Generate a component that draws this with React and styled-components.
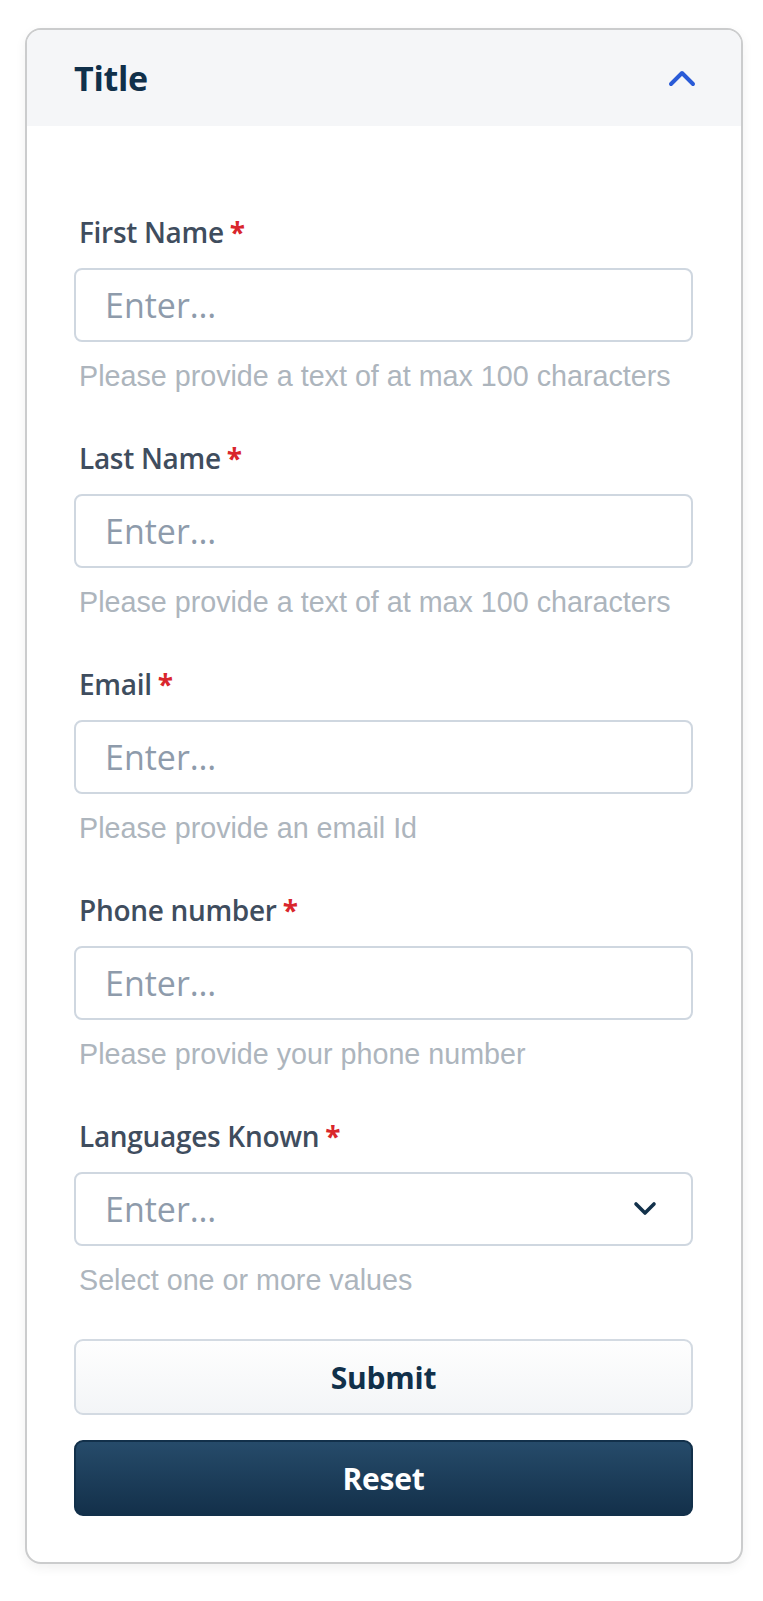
import React from "react";
import styled, { createGlobalStyle } from "styled-components";

const GlobalStyle = createGlobalStyle`
  * { box-sizing: border-box; }
  html, body { margin: 0; padding: 0; background: #ffffff; }
  body { font-family: "Open Sans", "Liberation Sans", sans-serif; }
`;

const Page = styled.div`
  padding: 28px 20px 36px 25px;
`;

const Card = styled.section`
  width: 718px;
  border: 2px solid #cbcccd;
  border-radius: 16px;
  overflow: hidden;
  background: #ffffff;
  box-shadow: 0 4px 12px rgba(0, 0, 0, 0.06);
`;

const Header = styled.header`
  height: 96px;
  display: flex;
  align-items: center;
  justify-content: space-between;
  padding: 0 44px 0 47px;
  background: #f5f6f8;
`;

const Title = styled.h2`
  margin: 0;
  font-family: "Open Sans", sans-serif;
  font-size: 34px;
  font-weight: 700;
  color: #10304a;
  letter-spacing: -0.3px;
`;

const IconButton = styled.button`
  border: 0;
  background: transparent;
  padding: 0;
  display: flex;
  align-items: center;
  color: ${(p) => p.$color || "#2a5bd7"};
`;

const Body = styled.form`
  display: flex;
  flex-direction: column;
  padding: 86px 48px 46px 47px;
`;

const Fields = styled.div`
  display: flex;
  flex-direction: column;
  gap: 42px;
`;

const Field = styled.div`
  display: flex;
  flex-direction: column;
`;

const Label = styled.label`
  font-family: "Open Sans", sans-serif;
  font-size: 28px;
  line-height: 40px;
  font-weight: 600;
  color: #3f4d5e;
  margin: 0 0 16px 5px;
  letter-spacing: -0.3px;
`;

const Required = styled.span`
  color: #d9262c;
  font-weight: 700;
  margin-left: 6px;
`;

const inputBox = `
  height: 74px;
  width: 100%;
  border: 2px solid #cfd7e0;
  border-radius: 8px;
  background: #ffffff;
  padding: 0 28px 0 29px;
  font-family: "Open Sans", sans-serif;
  font-size: 34px;
  color: #10304a;
`;

const TextInput = styled.input`
  ${inputBox}
  outline: none;
  &::placeholder {
    color: #8e9bab;
    opacity: 1;
  }
`;

const Select = styled.div`
  ${inputBox}
  display: flex;
  align-items: center;
  justify-content: space-between;
  padding-right: 34px;
`;

const Placeholder = styled.span`
  color: #8e9bab;
`;

const Helper = styled.p`
  margin: 14px 0 0 5px;
  font-family: "Liberation Sans", Arial, sans-serif;
  font-size: 28.7px;
  line-height: 40px;
  color: #adb5bd;
`;

const Actions = styled.div`
  display: flex;
  flex-direction: column;
  gap: 25px;
  margin-top: 39px;
`;

const Button = styled.button`
  height: 76px;
  width: 100%;
  border-radius: 9px;
  font-family: "Open Sans", sans-serif;
  font-size: 30px;
  font-weight: 700;
  letter-spacing: -0.2px;
  cursor: pointer;
  border: 2px solid ${(p) => (p.$primary ? "#12304a" : "#d3dae2")};
  color: ${(p) => (p.$primary ? "#ffffff" : "#10304a")};
  background: ${(p) =>
    p.$primary
      ? "linear-gradient(180deg, #264b6a 0%, #13304a 100%)"
      : "linear-gradient(180deg, #fefefe 0%, #f3f5f7 100%)"};
`;

const ChevronUp = () => (
  <svg width="30" height="18" viewBox="0 0 30 18" fill="none">
    <path d="M4 15 L15 4 L26 15" stroke="currentColor" strokeWidth="4" strokeLinecap="round" strokeLinejoin="round" />
  </svg>
);

const ChevronDown = () => (
  <svg width="24" height="16" viewBox="0 0 24 16" fill="none">
    <path d="M3 3 L12 12 L21 3" stroke="currentColor" strokeWidth="3.6" strokeLinecap="round" strokeLinejoin="round" />
  </svg>
);

const fields = [
  { label: "First Name", help: "Please provide a text of at max 100 characters" },
  { label: "Last Name", help: "Please provide a text of at max 100 characters" },
  { label: "Email", help: "Please provide an email Id" },
  { label: "Phone number", help: "Please provide your phone number" },
];

export default function App() {
  return (
    <Page>
      <GlobalStyle />
      <Card>
        <Header>
          <Title>Title</Title>
          <IconButton type="button" aria-label="Collapse">
            <ChevronUp />
          </IconButton>
        </Header>
        <Body onSubmit={(e) => e.preventDefault()}>
          <Fields>
            {fields.map((f) => (
              <Field key={f.label}>
                <Label>
                  {f.label}
                  <Required>*</Required>
                </Label>
                <TextInput placeholder="Enter…" />
                <Helper>{f.help}</Helper>
              </Field>
            ))}
            <Field>
              <Label>
                Languages Known
                <Required>*</Required>
              </Label>
              <Select>
                <Placeholder>Enter…</Placeholder>
                <IconButton type="button" $color="#13324b" aria-label="Open">
                  <ChevronDown />
                </IconButton>
              </Select>
              <Helper>Select one or more values</Helper>
            </Field>
          </Fields>
          <Actions>
            <Button type="submit">Submit</Button>
            <Button type="reset" $primary>Reset</Button>
          </Actions>
        </Body>
      </Card>
    </Page>
  );
}
